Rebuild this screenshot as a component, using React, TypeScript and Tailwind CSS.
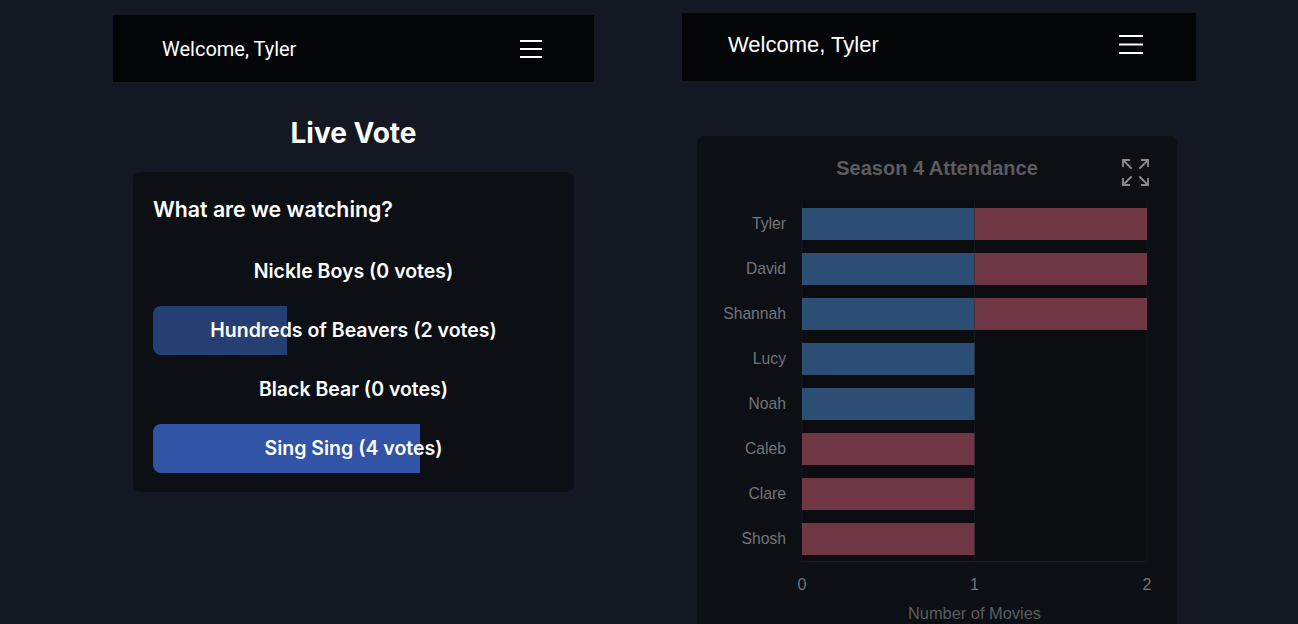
import { Fragment } from 'react';

const OPTIONS = [
  { title: 'Nickle Boys', votes: 0 },
  { title: 'Hundreds of Beavers', votes: 2 },
  { title: 'Black Bear', votes: 0 },
  { title: 'Sing Sing', votes: 4 },
];

// first = blue half of the season, second = red half
const ATTENDANCE = [
  { name: 'Tyler', first: 1, second: 1 },
  { name: 'David', first: 1, second: 1 },
  { name: 'Shannah', first: 1, second: 1 },
  { name: 'Lucy', first: 1, second: 0 },
  { name: 'Noah', first: 1, second: 0 },
  { name: 'Caleb', first: 0, second: 1 },
  { name: 'Clare', first: 0, second: 1 },
  { name: 'Shosh', first: 0, second: 1 },
];

function Hamburger({ w, gap }: { w: number; gap: number }) {
  return (
    <svg width={w} height={gap * 2 + 2} viewBox={`0 0 ${w} ${gap * 2 + 2}`}>
      {[0, 1, 2].map(i => (
        <rect key={i} x={0} y={i * gap} width={w} height={2} fill="#fff" />
      ))}
    </svg>
  );
}

// ── Live vote column ──────────────────────────────────────────────────────────

function LiveVote() {
  const total = OPTIONS.reduce((s, o) => s + o.votes, 0);
  return (
    <div className="w-[481px] shrink-0 mt-[15px] ml-[113px]">
      <div className="h-[67px] bg-[#040507] flex items-center justify-between pl-[49px] pr-[52px]">
        <span className="text-white text-[20px] font-['Roboto',sans-serif]">Welcome, Tyler</span>
        <Hamburger w={22} gap={8} />
      </div>
      <h1 className="mt-[33px] text-center text-white text-[28px] font-bold font-['Inter',sans-serif] leading-[36px]">
        Live Vote
      </h1>
      <div className="mx-[20px] mt-[21px] rounded-lg bg-[#0c0f14] px-5 pt-[24px] pb-[19px] font-['Inter',sans-serif]">
        <div className="text-white text-[21.3px] font-semibold leading-[26px]">What are we watching?</div>
        <div className="mt-[25px] flex flex-col gap-[10px]">
          {OPTIONS.map(o => {
            const pct = total ? (o.votes / total) * 100 : 0;
            return (
              <div key={o.title} className="relative h-[49px] flex items-center justify-center">
                {o.votes > 0 && (
                  <div
                    className={`absolute left-0 top-0 h-full rounded-l-lg ${o.votes >= 4 ? 'bg-[#3154a6]' : 'bg-[#263f73]'}`}
                    style={{ width: `${pct}%` }}
                  />
                )}
                <span className="relative text-white text-[19.5px] font-semibold">
                  {o.title} ({o.votes} votes)
                </span>
              </div>
            );
          })}
        </div>
      </div>
    </div>
  );
}

// ── Attendance chart ──────────────────────────────────────────────────────────

function ExpandIcon() {
  return (
    <svg width="29" height="29" viewBox="0 0 29 29" fill="none" stroke="#8b8d91" strokeWidth="1.8" strokeLinecap="square">
      <path d="M2 2 L10 10 M2 2 H8 M2 2 V8" />
      <path d="M27 2 L19 10 M27 2 H21 M27 2 V8" />
      <path d="M2 27 L10 19 M2 27 H8 M2 27 V21" />
      <path d="M27 27 L19 19 M27 27 H21 M27 27 V21" />
    </svg>
  );
}

function AttendanceChart() {
  const x0 = 105;
  const unit = 172.5;
  const top = 65.5;
  const band = 45;
  const plotBottom = top + band * ATTENDANCE.length;
  return (
    <div className="relative ml-[15px] mr-[19px] mt-[55px] h-[500px] rounded-lg bg-[#0c0f14] font-['Liberation_Sans',sans-serif]">
      <div className="absolute right-[27px] top-[22px]">
        <ExpandIcon />
      </div>
      <svg width="480" height="500" viewBox="0 0 480 500">
        <text x="240" y="39" textAnchor="middle" fontSize="20" fontWeight="700" fill="#5b5c60">
          Season 4 Attendance
        </text>
        <rect x={x0} y={top} width={unit * 2} height={plotBottom - top} fill="#0b0d11" />
        {[0, 1, 2].map(t => (
          <line key={t} x1={x0 + unit * t} x2={x0 + unit * t} y1={top} y2={plotBottom} stroke="#16191f" strokeWidth="1" />
        ))}
        <line x1={x0} x2={x0 + unit * 2} y1={plotBottom} y2={plotBottom} stroke="#16191f" strokeWidth="1" />
        {ATTENDANCE.map((p, i) => {
          const cy = top + band * i + band / 2;
          return (
            <Fragment key={p.name}>
              <text x="89" y={cy + 5} textAnchor="end" fontSize="15.7" fill="#737579">
                {p.name}
              </text>
              {p.first > 0 && (
                <rect x={x0} y={cy - 16} width={unit * p.first} height={32} fill="#2c4e74" />
              )}
              {p.second > 0 && (
                <rect x={x0 + unit * p.first} y={cy - 16} width={unit * p.second} height={32} fill="#6e3743" />
              )}
            </Fragment>
          );
        })}
        {[0, 1, 2].map(t => (
          <text key={t} x={x0 + unit * t} y={454} textAnchor="middle" fontSize="16" fill="#737579">
            {t}
          </text>
        ))}
        <text x={x0 + unit} y={483} textAnchor="middle" fontSize="16.4" fill="#5b5c60">
          Number of Movies
        </text>
      </svg>
    </div>
  );
}

function ChartColumn() {
  return (
    <div className="w-[514px] shrink-0 mt-[13px] ml-[88px]">
      <div className="h-[68px] bg-[#040507] flex items-center justify-between pl-[46px] pr-[53px] pb-[5px]">
        <span className="text-white text-[22px] font-['Liberation_Sans',sans-serif]">Welcome, Tyler</span>
        <Hamburger w={24} gap={8.5} />
      </div>
      <AttendanceChart />
    </div>
  );
}

export default function App() {
  return (
    <div className="h-[624px] overflow-hidden bg-[#141823] flex items-start">
      <LiveVote />
      <ChartColumn />
    </div>
  );
}
